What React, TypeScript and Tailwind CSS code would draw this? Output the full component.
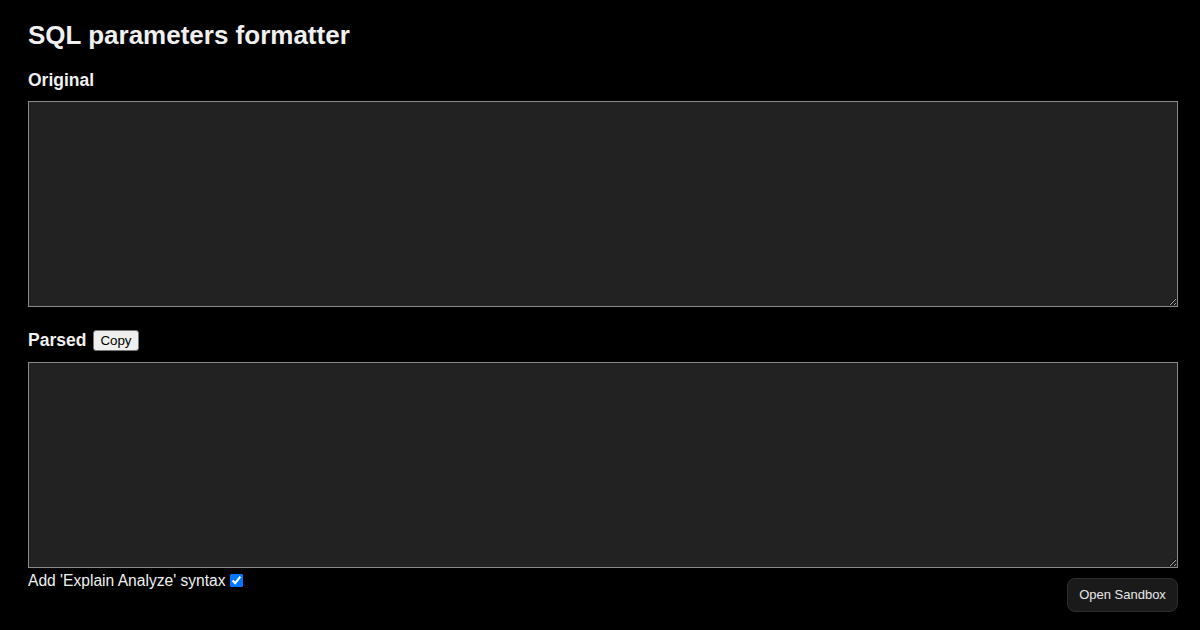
import { useState } from 'react';

export default function App() {
  const [original, setOriginal] = useState('');
  const [explain, setExplain] = useState(true);

  return (
    <div className="min-h-[630px] bg-black px-[28px] pt-[20px] text-[#f0f0f0] [font-family:'Liberation_Sans',Arial,sans-serif]">
      <h1 className="h-[30px] text-[26px] font-bold leading-[30px]">SQL parameters formatter</h1>

      <h2 className="mt-[20px] h-[20px] text-[17.5px] font-bold leading-[20px]">Original</h2>
      <textarea
        value={original}
        onChange={(e) => setOriginal(e.target.value)}
        className="mt-[11px] block h-[206px] w-[1150px] border border-[#8a8a8a] bg-[#222222] p-[2px] text-[13px] text-white [color-scheme:dark]"
      />

      <div className="mt-[20px] flex h-[26px] items-center">
        <h2 className="text-[17.5px] font-bold leading-[20px]">Parsed</h2>
        <button className="ml-[7px] mt-[1px] h-[21px] rounded-[3px] border border-[#767676] bg-[#efefef] px-[6px] text-[13.33px] leading-[19px] text-black">
          Copy
        </button>
      </div>
      <textarea
        readOnly
        value=""
        className="mt-[9px] block h-[206px] w-[1150px] border border-[#8a8a8a] bg-[#222222] p-[2px] text-[13px] text-white [color-scheme:dark]"
      />

      <div className="flex w-[1150px] items-start justify-between">
        <label className="mt-[4px] flex items-center text-[15.6px] leading-[18px]">
          Add 'Explain Analyze' syntax
          <input
            type="checkbox"
            checked={explain}
            onChange={(e) => setExplain(e.target.checked)}
            className="ml-[4px] mt-[-1px] h-[13px] w-[13px] accent-[#0075ff]"
          />
        </label>
        <button className="mt-[10px] h-[34px] w-[111px] rounded-[8px] border border-[#2e2e2e] bg-[#1a1a1a] text-[13px] text-[#e8e8e8]">
          Open Sandbox
        </button>
      </div>
    </div>
  );
}
